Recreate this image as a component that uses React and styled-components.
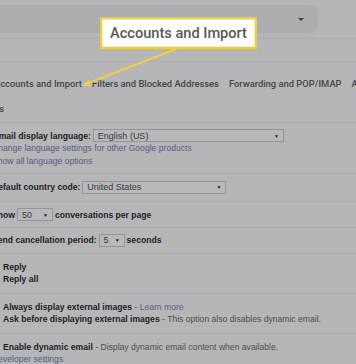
import React from "react";
import styled, { createGlobalStyle } from "styled-components";

const Global = createGlobalStyle`
  html, body {
    margin: 0;
    padding: 0;
    background: #b6b5b7;
    overflow: hidden;
  }
  body {
    font-family: "Liberation Sans", Arial, sans-serif;
    color: #222;
  }
`;

const Page = styled.div`
  position: relative;
  width: 356px;
  height: 364px;
  overflow: hidden;
  background: #b6b5b7;
`;

const Header = styled.div`
  height: 39px;
  padding-top: 5px;
  box-sizing: border-box;
  border-bottom: 1px solid #acabad;
`;

const SearchBar = styled.div`
  display: flex;
  align-items: center;
  justify-content: flex-end;
  margin-left: -20px;
  width: 338px;
  height: 28px;
  border-radius: 8px;
  background: #adacaf;
  padding-right: 14px;
  box-sizing: border-box;
`;

const Caret = styled.span`
  width: 0;
  height: 0;
  border-left: 3.5px solid transparent;
  border-right: 3.5px solid transparent;
  border-top: 3.5px solid #3a3a3a;
`;

const TitleBand = styled.div`
  height: 22px;
  border-bottom: 1px solid #b0afb1;
`;

const TabRow = styled.div`
  display: flex;
  gap: 10px;
  height: 25px;
  align-items: center;
  white-space: nowrap;
  margin-left: ${(p) => p.$shift}px;
  font-family: Roboto, "Liberation Sans", sans-serif;
  font-weight: 500;
  font-size: 9.4px;
  color: #474649;
`;

const Tabs = styled.div`
  padding-top: 9px;
  height: 60px;
  box-sizing: border-box;
`;

const Column = styled.div`
  margin-left: -8px;
  font-size: 8.6px;
`;

const Section = styled.div`
  border-top: 1px solid #aaa9ab;
  padding: ${(p) => p.$pad || "6px 0 6px"};
`;

const Line = styled.div`
  display: flex;
  align-items: center;
  gap: 2px;
  height: ${(p) => p.$h || 12}px;
  white-space: nowrap;
`;

const Label = styled.span`
  font-weight: bold;
  color: #232224;
`;

const Plain = styled.span`
  color: #4e4d50;
`;

const Link = styled.span`
  color: #52607f;
`;

const Select = styled.span`
  display: inline-flex;
  align-items: center;
  justify-content: space-between;
  box-sizing: border-box;
  width: ${(p) => p.$w}px;
  height: 13px;
  padding: 0 4px;
  border: 1px solid #959496;
  background: #b9b8ba;
  color: #3a393c;
  font-size: 9px;
  &::after {
    content: "▼";
    font-size: 5px;
    color: #222;
  }
`;

const Option = styled.div`
  padding-left: 11px;
  height: ${(p) => p.$h || 12}px;
  display: flex;
  align-items: center;
  white-space: nowrap;
`;

const Callout = styled.div`
  position: absolute;
  left: 100px;
  top: 17px;
  width: 157px;
  height: 32px;
  box-sizing: border-box;
  border: 2px solid #efcf3e;
  box-shadow: inset 0 0 0 1px #f7eeb8;
  background: #fdfdfc;
  display: flex;
  align-items: center;
  justify-content: center;
  font-family: Roboto, "Liberation Sans", sans-serif;
  font-weight: 500;
  font-size: 14.6px;
  color: #59585a;
`;

const Pointer = styled.svg`
  position: absolute;
  left: 0;
  top: 0;
  pointer-events: none;
`;

export default function App() {
  return (
    <Page>
      <Global />
      <Header>
        <SearchBar>
          <Caret />
        </SearchBar>
      </Header>
      <TitleBand />
      <Tabs>
        <TabRow $shift={-6}>
          <span>Accounts and Import</span>
          <span>Filters and Blocked Addresses</span>
          <span>Forwarding and POP/IMAP</span>
          <span>Add-ons</span>
        </TabRow>
        <TabRow $shift={-30}>
          <span>Themes</span>
        </TabRow>
      </Tabs>
      <Column>
        <Section $pad="6px 0 6px">
          <Line $h={13}>
            <Label>Gmail display language:</Label>
            <Select $w={191}>English (US)</Select>
          </Line>
          <Line $h={12}>
            <Link>Change language settings for other Google products</Link>
          </Line>
          <Line $h={13}>
            <Link>Show all language options</Link>
          </Line>
        </Section>
        <Section $pad="7px 0 8px">
          <Line $h={12}>
            <Label>Default country code:</Label>
            <Select $w={144}>United States</Select>
          </Line>
        </Section>
        <Section $pad="6px 0 6px">
          <Line $h={13}>
            <Label>Show</Label>
            <Select $w={36}>50</Select>
            <Label>conversations per page</Label>
          </Line>
        </Section>
        <Section $pad="6px 0 7px">
          <Line $h={12}>
            <Label>Send cancellation period:</Label>
            <Select $w={26}>5</Select>
            <Label>seconds</Label>
          </Line>
        </Section>
        <Section $pad="7px 0 8px">
          <Option>
            <Label>Reply</Label>
          </Option>
          <Option>
            <Label>Reply all</Label>
          </Option>
        </Section>
        <Section $pad="7px 0 8px">
          <Option>
            <Label>Always display external images</Label>
            <Plain>&nbsp;-&nbsp;</Plain>
            <Link>Learn more</Link>
          </Option>
          <Option>
            <Label>Ask before displaying external images</Label>
            <Plain>&nbsp;- This option also disables dynamic email.</Plain>
          </Option>
        </Section>
        <Section $pad="7px 0 8px">
          <Option>
            <Label>Enable dynamic email</Label>
            <Plain>&nbsp;- Display dynamic email content when available.</Plain>
          </Option>
          <Line>
            <Link>Developer settings</Link>
          </Line>
        </Section>
      </Column>
      <Callout>Accounts and Import</Callout>
      <Pointer width="356" height="364" viewBox="0 0 356 364">
        <line x1="176" y1="49" x2="86" y2="84" stroke="#efcf3e" strokeWidth="2" />
        <path d="M82 86 L89 80 L90 86 Z" fill="#efcf3e" />
      </Pointer>
    </Page>
  );
}
